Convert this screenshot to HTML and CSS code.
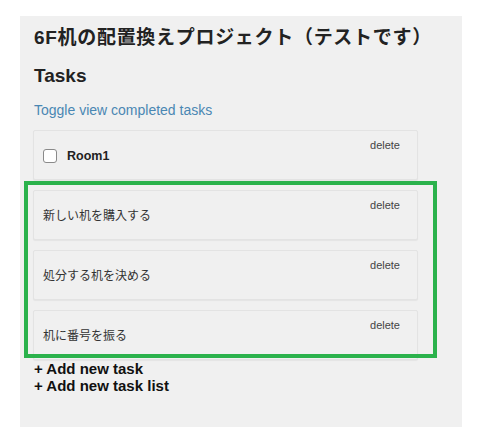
FILE: index.html
```html
<!DOCTYPE html>
<html lang="ja">
<head>
<meta charset="utf-8">
<title>Tasks</title>
<link rel="stylesheet" href="styles.css">
</head>
<body>
<div class="page">
  <div class="panel">
    <h1 class="title">6F机の配置換えプロジェクト（テストです）</h1>
    <h2 class="subtitle">Tasks</h2>
    <a class="toggle" href="#">Toggle view completed tasks</a>
    <div class="cards">
      <div class="card">
        <div class="card-main">
          <span class="check"></span>
          <span class="list-name">Room1</span>
        </div>
        <span class="delete">delete</span>
      </div>
      <div class="card">
        <div class="card-main"><span class="task-name">新しい机を購入する</span></div>
        <span class="delete">delete</span>
      </div>
      <div class="card">
        <div class="card-main"><span class="task-name">処分する机を決める</span></div>
        <span class="delete">delete</span>
      </div>
      <div class="card">
        <div class="card-main"><span class="task-name">机に番号を振る</span></div>
        <span class="delete">delete</span>
      </div>
    </div>
    <div class="adds">
      <a class="add" href="#">+ Add new task</a>
      <a class="add" href="#">+ Add new task list</a>
    </div>
  </div>
</div>
<div class="highlight"></div>
</body>
</html>
```

FILE: styles.css
```css
html, body {
  margin: 0;
  padding: 0;
  background: #ffffff;
}
body {
  position: relative;
  font-family: "Liberation Sans", "Noto Sans CJK JP", sans-serif;
  color: #333333;
}
.page {
  padding: 16px 16px 0 20px;
}
.panel {
  background: #f0f0f0;
  width: 442px;
  box-sizing: border-box;
  padding: 10px 44px 33px 14px;
}
.title {
  margin: 0;
  font-size: 19px;
  line-height: 24px;
  letter-spacing: 0.7px;
  font-weight: bold;
  color: #222222;
  white-space: nowrap;
}
.subtitle {
  margin: 14px 0 0 0;
  font-size: 19px;
  line-height: 24px;
  font-weight: bold;
  color: #222222;
}
.toggle {
  display: block;
  margin-top: 12px;
  font-size: 14px;
  line-height: 20px;
  color: #4a87b3;
  text-decoration: none;
}
.cards {
  margin: 10px 0 0 -1px;
  display: flex;
  flex-direction: column;
  gap: 10px;
}
.card {
  height: 50px;
  box-sizing: border-box;
  background: #f0f0f0;
  border: 1px solid #e3e3e3;
  border-radius: 2px;
  box-shadow: 0 1px 1px rgba(0, 0, 0, 0.05);
  padding: 8px 17px 0 9px;
  display: flex;
  justify-content: space-between;
  align-items: flex-start;
}
.card-main {
  margin-top: 9px;
  height: 16px;
  display: flex;
  align-items: center;
  gap: 10px;
}
.check {
  width: 14px;
  height: 14px;
  box-sizing: border-box;
  border: 1px solid #8a8a8a;
  border-radius: 3px;
  background: #ffffff;
}
.list-name {
  font-size: 12.5px;
  font-weight: bold;
  color: #222222;
  line-height: 16px;
}
.task-name {
  font-size: 12px;
  line-height: 16px;
  color: #333333;
}
.delete {
  font-size: 11px;
  line-height: 13px;
  color: #444444;
}
.adds {
  margin-top: 0;
  display: flex;
  flex-direction: column;
}
.add {
  font-size: 15px;
  line-height: 17px;
  font-weight: bold;
  color: #111111;
  text-decoration: none;
}
.highlight {
  position: absolute;
  left: 24px;
  top: 181px;
  width: 413px;
  height: 177px;
  box-sizing: border-box;
  border: 4px solid #2bb24c;
  pointer-events: none;
}
```
